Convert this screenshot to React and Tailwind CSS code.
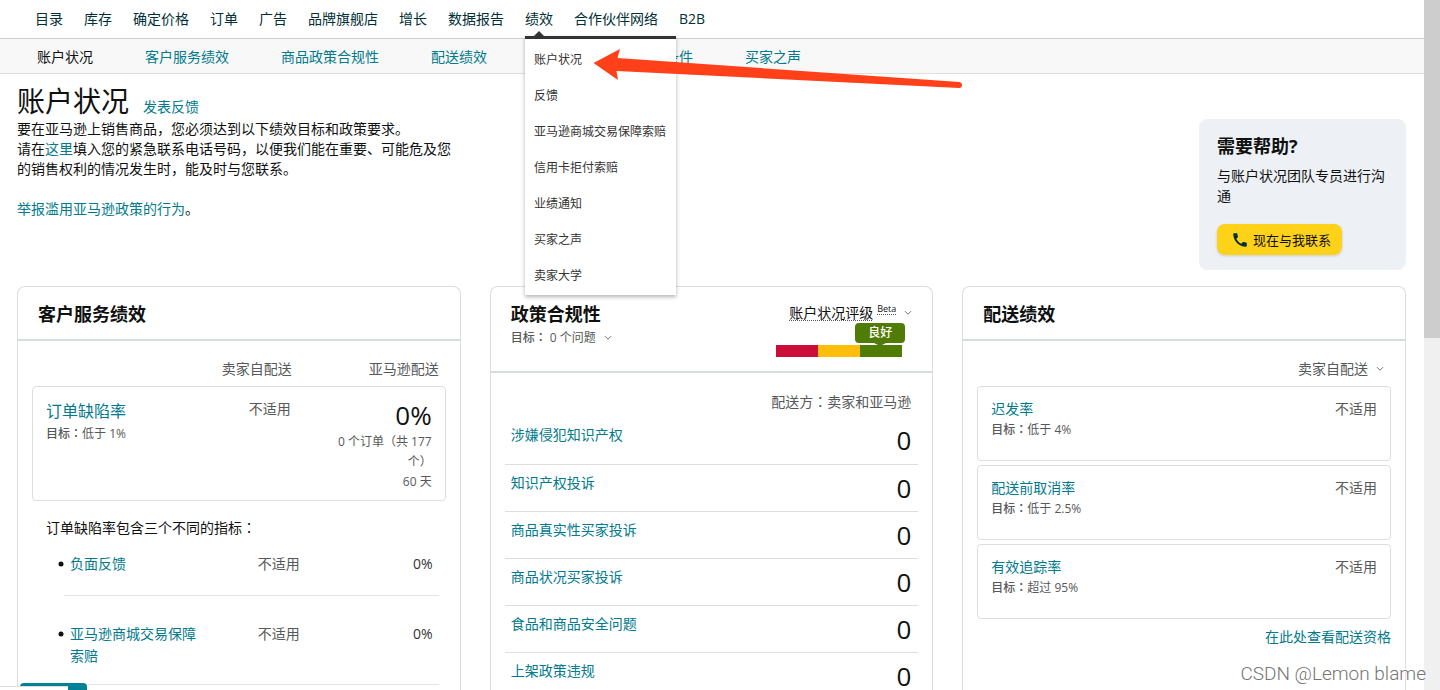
import React from "react";

const NAV = ["目录", "库存", "确定价格", "订单", "广告", "品牌旗舰店", "增长", "数据报告", "绩效", "合作伙伴网络", "B2B"];

const PERFORMANCE_MENU = [
  "账户状况",
  "反馈",
  "亚马逊商城交易保障索赔",
  "信用卡拒付索赔",
  "业绩通知",
  "买家之声",
  "卖家大学",
];

const SUBNAV = ["账户状况", "客户服务绩效", "商品政策合规性", "配送绩效", "亚马逊配送计划资格条件", "买家之声"];

const POLICY_ROWS = [
  "涉嫌侵犯知识产权",
  "知识产权投诉",
  "商品真实性买家投诉",
  "商品状况买家投诉",
  "食品和商品安全问题",
  "上架政策违规",
];

const SHIPPING = [
  { name: "迟发率", target: "低于 4%" },
  { name: "配送前取消率", target: "低于 2.5%" },
  { name: "有效追踪率", target: "超过 95%" },
];

const DEFECTS = ["负面反馈", "亚马逊商城交易保障索赔"];

function Link({ className = "", children }) {
  return (
    <a href="#" className={`text-[#007a8c] ${className}`}>
      {children}
    </a>
  );
}

// Full-width colon centred in its cell.
function Colon() {
  return <span className="font-['Noto_Sans_CJK_JP',sans-serif]">：</span>;
}

function Chevron() {
  return (
    <svg width="8" height="6" viewBox="0 0 8 6" fill="none" stroke="#6f7373" strokeWidth="1" aria-hidden="true">
      <path d="M1 1.2 L4 4.2 L7 1.2" />
    </svg>
  );
}

function TopNav() {
  return (
    <nav className="flex h-[39px] shrink-0 items-center gap-[21px] border-b border-[#cfcfcf] pl-[35px] text-[#002f36]">
      {NAV.map((label) =>
        label === "绩效" ? (
          <div key={label} className="relative">
            <a href="#">{label}</a>
            <div className="absolute top-[27px] left-0 z-10 w-[151px] border-t-[3px] border-[#333] bg-white pt-[3px] pb-px text-xs text-[#333] shadow-[0_2px_4px_rgba(0,0,0,0.3)]">
              <svg className="absolute -top-2 left-2" width="12" height="6" viewBox="0 0 12 6" aria-hidden="true">
                <path d="M0 6 L6 0 L12 6 Z" fill="#333" />
              </svg>
              {PERFORMANCE_MENU.map((item) => (
                <a key={item} href="#" className="block px-[9px] leading-9 whitespace-nowrap">
                  {item}
                </a>
              ))}
            </div>
          </div>
        ) : (
          <a key={label} href="#">
            {label}
          </a>
        )
      )}
    </nav>
  );
}

function SubNav() {
  return (
    <nav className="flex h-[35px] shrink-0 items-center gap-[52px] border-b border-[#e0e0e0] bg-[#f8f8f8] pt-px pl-[37px]">
      {SUBNAV.map((label, i) => (
        <a key={label} href="#" className={i === 0 ? "text-[#0f1111]" : "text-[#007a8c]"}>
          {label}
        </a>
      ))}
    </nav>
  );
}

function Intro() {
  return (
    <div className="pt-2.5">
      <div className="flex items-baseline gap-3.5">
        <h1 className="text-[28px] leading-[35px]">账户状况</h1>
        <Link>发表反馈</Link>
      </div>
      <p>要在亚马逊上销售商品，您必须达到以下绩效目标和政策要求。</p>
      <p className="max-w-[440px]">
        请在<Link>这里</Link>填入您的紧急联系电话号码，以便我们能在重要、可能危及您的销售权利的情况发生时，能及时与您联系。
      </p>
      <p className="mt-5">
        <Link>举报滥用亚马逊政策的行为</Link>。
      </p>
    </div>
  );
}

function HelpCard() {
  return (
    <aside className="mt-[45px] w-[207px] rounded-lg border border-[#edf2f6] bg-[#edf0f4] px-[17px] pt-3.5 pb-3.5">
      <h2 className="text-lg leading-6 font-bold">需要帮助?</h2>
      <p className="mt-2">与账户状况团队专员进行沟通</p>
      <button
        type="button"
        className="mt-[18px] flex h-[31px] items-center gap-1 rounded-lg bg-[#ffd21a] pr-[11px] pl-3.5 text-[13px] shadow-[0_1px_3px_rgba(0,0,0,0.15)]"
      >
        <svg width="18" height="18" viewBox="0 0 24 24" fill="#002f36" aria-hidden="true">
          <path d="M20.01 15.38c-1.23 0-2.42-.2-3.53-.56a.977.977 0 0 0-1.01.24l-1.57 1.97c-2.83-1.35-5.48-3.9-6.89-6.83l1.95-1.66c.27-.28.35-.67.24-1.02-.37-1.11-.56-2.3-.56-3.53 0-.54-.45-.99-.99-.99H4.19C3.65 3 3 3.24 3 3.99 3 13.28 10.73 21 20.01 21c.71 0 .99-.63.99-1.18v-3.45c0-.54-.45-.99-.99-.99z" />
        </svg>
        现在与我联系
      </button>
    </aside>
  );
}

function Card({ header, children }) {
  return (
    <section className="min-w-0 rounded-t-lg border border-b-0 border-[#dcdfdf]">
      <header className="border-b-2 border-[#d9dcdc] px-5 pt-3.5">{header}</header>
      <div className="px-3.5">{children}</div>
    </section>
  );
}

function CardTitle({ children }) {
  return <h2 className="text-lg leading-[26px] font-bold">{children}</h2>;
}

function Target({ children }) {
  return (
    <p className="text-xs leading-5 text-[#565959]">
      <span className="font-medium">
        目标
        <Colon />
      </span>
      {children}
    </p>
  );
}

function CustomerService() {
  return (
    <Card
      header={
        <div className="pb-3">
          <CardTitle>客户服务绩效</CardTitle>
        </div>
      }
    >
      <div className="flex justify-end gap-[77px] pt-[18px] pr-[7px] pb-[7px] text-[#565959]">
        <span>卖家自配送</span>
        <span>亚马逊配送</span>
      </div>
      <div className="flex rounded border border-[#dcdfdf] px-[13px] pt-3 pb-2">
        <div className="flex-1">
          <Link className="text-base leading-6">订单缺陷率</Link>
          <Target>低于 1%</Target>
        </div>
        <div className="text-[#565959]">不适用</div>
        <div className="ml-[41px] w-[100px] text-right text-xs leading-5 text-[#565959]">
          <p className="pt-[3px] pb-1 text-[26px] leading-[26px] text-[#0f1111]">0%</p>
          <p>0 个订单（共 177 个）</p>
          <p>60 天</p>
        </div>
      </div>
      <p className="mt-4 ml-3.5">
        订单缺陷率包含三个不同的指标
        <Colon />
      </p>
      <ul className="mr-[7px] ml-8">
        {DEFECTS.map((name) => (
          <li key={name} className="flex border-b border-[#e3e6e6] pt-[15px] pb-5 leading-[22px] not-first:pt-[27px] not-first:pb-[17px]">
            <svg className="-ml-1.5 mt-2 mr-1.5 shrink-0" width="6" height="6" viewBox="0 0 6 6" aria-hidden="true">
              <circle cx="3" cy="3" r="2.5" fill="#0f1111" />
            </svg>
            <div className="flex-1">
              <Link className="block w-[130px]">{name}</Link>
            </div>
            <span className="text-[#565959]">不适用</span>
            <span className="w-[139px] pr-1.5 text-right text-[#333]">0%</span>
          </li>
        ))}
      </ul>
    </Card>
  );
}

function HealthRating() {
  return (
    <div className="flex flex-col items-end">
      <button type="button" className="flex items-center gap-2 pt-0.5 leading-5">
        <span className="flex items-start gap-1">
          <span className="underline decoration-[#555] decoration-dotted decoration-1 underline-offset-2">账户状况评级</span>
          <span className="text-[9px] leading-3 underline decoration-[#555] decoration-dotted decoration-1 underline-offset-2">Beta</span>
        </span>
        <Chevron />
      </button>
      <div className="mr-[7px] w-[50px] rounded bg-[#507c05] text-center text-xs leading-5 font-medium text-white">良好</div>
      <svg className="mr-[26px]" width="12" height="2" viewBox="0 0 12 2" aria-hidden="true">
        <path d="M0 0 H12 L8 2 H4 Z" fill="#507c05" />
      </svg>
      <div className="mr-2.5 flex h-3 w-[126px]">
        <span className="flex-1 bg-[#cc0c39]" />
        <span className="flex-1 bg-[#ffbe0b]" />
        <span className="flex-1 bg-[#507c05]" />
      </div>
    </div>
  );
}

function PolicyCompliance() {
  return (
    <Card
      header={
        <div className="flex justify-between pb-3.5">
          <div>
            <CardTitle>政策合规性</CardTitle>
            <button type="button" className="flex items-center gap-2 text-xs leading-5 text-[#565959]">
              <span>
                <span className="font-medium">
                  目标
                  <Colon />
                </span>{" "}
                0 个问题
              </span>
              <Chevron />
            </button>
          </div>
          <HealthRating />
        </div>
      }
    >
      <p className="pt-[18px] pr-[7px] pb-[5px] text-right text-[#565959]">
        配送方
        <Colon />
        卖家和亚马逊
      </p>
      <table className="w-full">
        <tbody>
          {POLICY_ROWS.map((name) => (
            <tr key={name} className="h-[47px] border-b border-[#dcdfdf]">
              <th scope="row" className="pt-2 pl-1.5 text-left align-top font-normal">
                <Link>{name}</Link>
              </th>
              <td className="pr-[7px] text-right text-[26px] leading-8">0</td>
            </tr>
          ))}
        </tbody>
      </table>
    </Card>
  );
}

function ShippingPerformance() {
  return (
    <Card
      header={
        <div className="pb-3">
          <CardTitle>配送绩效</CardTitle>
        </div>
      }
    >
      <div className="flex items-center justify-end gap-2 pt-[18px] pr-[7px] pb-[7px] text-[#565959]">
        <select aria-label="配送方式" className="h-5 appearance-none bg-transparent">
          <option>卖家自配送</option>
        </select>
        <Chevron />
      </div>
      <div className="flex flex-col gap-1">
        {SHIPPING.map((m) => (
          <div key={m.name} className="flex h-[75px] justify-between rounded border border-[#dcdfdf] px-[13px] pt-3">
            <div>
              <Link>{m.name}</Link>
              <Target>{m.target}</Target>
            </div>
            <span className="text-[#565959]">不适用</span>
          </div>
        ))}
      </div>
      <p className="mt-2 text-right">
        <Link>在此处查看配送资格</Link>
      </p>
    </Card>
  );
}

export default function App() {
  return (
    <div className="relative flex h-screen overflow-hidden bg-white font-['Open_Sans','Noto_Sans_CJK_SC',sans-serif] text-sm leading-5 text-[#0f1111]">
      <div className="flex min-w-0 flex-1 flex-col">
        <TopNav />
        <SubNav />
        <main className="flex flex-1 flex-col pr-[18px] pl-[17px]">
          <div className="flex justify-between">
            <Intro />
            <HelpCard />
          </div>
          <div className="mt-4 grid flex-1 grid-cols-3 gap-[29px]">
            <CustomerService />
            <PolicyCompliance />
            <ShippingPerformance />
          </div>
        </main>
      </div>

      <div className="w-4 bg-[#f0f0f0]">
        <div className="h-[49%] bg-[#cdcdcd]" />
      </div>

      <svg className="absolute top-[46px] left-[592px] z-20" width="372" height="46" viewBox="592 46 372 46" aria-hidden="true">
        <path
          d="M593.5 63 L620 49 L617.5 58 L959.5 82 Q962 82.6 962 85 Q962 88 959 88 L616.5 71 L618 80 Z"
          fill="#ff4019"
        />
      </svg>

      <div className="absolute bottom-0 left-5 h-[7px] w-[67px] rounded-t bg-[#008296]" />
      <div className="absolute bottom-0 left-0 h-1 w-[68px] border-t border-[#ddd] bg-white" />

      <p className="absolute right-3.5 bottom-1 z-20 font-['Roboto',sans-serif] text-[19px] leading-6 font-light text-[#757575] [text-shadow:-1px_-1px_0_#fff]">
        CSDN @Lemon blame
      </p>
    </div>
  );
}
